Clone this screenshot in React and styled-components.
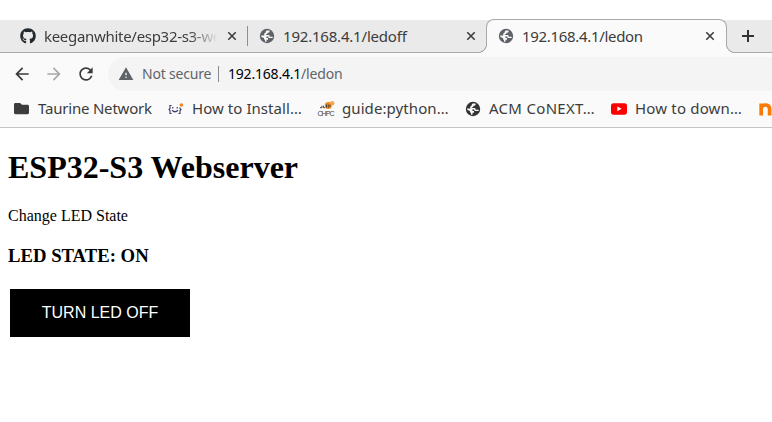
import React from "react";
import styled, { createGlobalStyle } from "styled-components";
import { FaGithub, FaFolder } from "react-icons/fa";
import { MdArrowBack, MdArrowForward, MdRefresh, MdWarning } from "react-icons/md";

const GlobalStyle = createGlobalStyle`
  * { box-sizing: border-box; }
  body { margin: 0; background: #fff; overflow: hidden; }
`;

const Window = styled.div`
  width: 772px;
  height: 422px;
  overflow: hidden;
  padding-top: 19px;
  background: #fff;
  font-family: "Noto Sans", sans-serif;
  color: #3c3c3c;
`;

const TabStrip = styled.div`
  display: flex;
  height: 34px;
  background: linear-gradient(#fff 1px, #eaeaea 1px, #eaeaea 33px, #a9a9a9 33px);
`;

const Tab = styled.div`
  position: relative;
  display: flex;
  align-items: center;
  flex: none;
  width: ${(p) => p.$width}px;
  padding: 0 10px 0 ${(p) => p.$inset}px;
  font-size: 15px;
`;

const ActiveTab = styled(Tab)`
  background: #fafafa;
  border: 1px solid #a9a9a9;
  border-bottom: 0;
  border-radius: 8px 8px 0 0;
  padding-right: 11px;
  padding-bottom: 1px;

  &::before,
  &::after {
    content: "";
    position: absolute;
    bottom: 0;
    width: 9px;
    height: 9px;
  }
  &::before {
    left: -9px;
    background: radial-gradient(circle at 0 0, #eaeaea 7.7px, #a9a9a9 8.2px, #a9a9a9 8.8px, #fafafa 9.3px);
  }
  &::after {
    right: -9px;
    background: radial-gradient(circle at 100% 0, #eaeaea 7.7px, #a9a9a9 8.2px, #a9a9a9 8.8px, #fafafa 9.3px);
  }
`;

const TabTitle = styled.span`
  flex: 1;
  min-width: 0;
  margin-left: 8px;
  margin-right: 6px;
  white-space: nowrap;
  line-height: 22px;
  letter-spacing: ${(p) => p.$spacing || 0}px;
  ${(p) => p.$fade && "mask-image: linear-gradient(to right, #000 82%, transparent 98%);"}
`;

const TabDivider = styled.div`
  flex: none;
  width: 1px;
  height: 20px;
  margin-top: 7px;
  background: #8f8f8f;
`;

const NewTab = styled.div`
  display: flex;
  align-items: center;
  margin-left: 14px;
  padding-bottom: 1px;
`;

const Toolbar = styled.div`
  display: flex;
  align-items: center;
  height: 42px;
  padding-left: 12px;
  background: #fafafa;
`;

const NavButton = styled.span`
  display: flex;
  width: 32px;
  color: ${(p) => (p.$muted ? "#a9a9a9" : "#3a3a3a")};
`;

const AddressBar = styled.div`
  display: flex;
  align-items: center;
  flex: 1;
  height: 34px;
  padding-left: 10px;
  border-radius: 17px 0 0 17px;
  background: #f4f4f4;
  color: #5f6368;
  font-size: 14px;
`;

const AddressText = styled.span`
  padding-bottom: 2px;
  white-space: nowrap;
  letter-spacing: ${(p) => p.$spacing || 0}px;
`;

const Security = styled(AddressText)`
  width: 76px;
  margin-left: 8px;
`;

const AddressDivider = styled.span`
  width: 1px;
  height: 16px;
  margin-right: 9px;
  background: #8a8a8a;
`;

const Host = styled(AddressText)`
  width: 73px;
  color: #000;
`;

const Bookmarks = styled.div`
  display: flex;
  align-items: center;
  height: 33px;
  padding: 0 0 5px 14px;
  border-bottom: 1px solid #c4c4c4;
  background: #fafafa;
`;

const Bookmark = styled.div`
  display: flex;
  align-items: center;
  flex: none;
  width: ${(p) => p.$width}px;
  height: 27px;
  font-size: 15px;
`;

const BookmarkIcon = styled.span`
  display: flex;
  align-items: center;
  width: 16px;
  height: 16px;
  flex: none;
  margin-right: 8px;
`;

const BookmarkLabel = styled.span`
  padding-bottom: 2px;
  white-space: nowrap;
  letter-spacing: ${(p) => p.$spacing}px;
`;

const Page = styled.main`
  padding: 21px 8px;
  color: #000;
  font-family: "Liberation Serif", serif;
  font-size: 16px;
`;

const Heading = styled.h1`
  margin: 0 0 21px;
  font-size: 32px;
  line-height: 37px;
`;

const Description = styled.p`
  margin: 0;
  line-height: 18px;
`;

const LedState = styled.h3`
  margin: 20px 0 22px;
  font-size: 18.72px;
  line-height: 22px;
`;

const LedButton = styled.button`
  display: block;
  width: 180px;
  height: 48px;
  margin-left: 2px;
  padding: 0 0 1px;
  border: 0;
  background: #000;
  color: #fff;
  font: 16px "Liberation Sans", sans-serif;
`;

function Globe({ color = "#5f6368" }) {
  return (
    <svg width="16" height="16" viewBox="0 0 16 16">
      <circle cx="8" cy="8" r="7.2" fill={color} />
      <path
        d="M7.6 2.4 H10.6 V3.6 Q10.6 4.7 9.5 4.7 H8.4 V5.4 Q8.4 6.2 7.6 6.2 H6.8 V7.1 H9.6 Q10.6 7.1 10.6 8.1 V8.8 H13.7 V10 H10.2 Q9.3 10 9.3 9 V8.5 H6.6 Q5.2 8.5 5.2 7.2 V6.2 Q5.2 4.9 6.5 4.7 Q6.6 3.2 7.6 2.4Z M2.2 7.6 H4.6 Q7.6 7.8 7.6 10 H9 V11.7 H7.5 V13.7 Q6.3 13.7 6 13.4 V12 Q5 11.7 5 10.6 V10 L2.4 8.9Z"
        fill="#fafafa"
      />
    </svg>
  );
}

function Close() {
  return (
    <svg width="10" height="10" viewBox="0 0 10 10">
      <path d="M1.3 1.3 L8.7 8.7 M8.7 1.3 L1.3 8.7" stroke="#3c3c3c" strokeWidth="1.6" />
    </svg>
  );
}

function Plus() {
  return (
    <svg width="14" height="14" viewBox="0 0 14 14">
      <path d="M7 1 V13 M1 7 H13" stroke="#333" strokeWidth="2" />
    </svg>
  );
}

function SmileyBraces() {
  return (
    <svg width="16" height="16" viewBox="0 0 16 16" fill="none">
      <path d="M3.5 4.5 H2 V7.5 L1 8.5 L2 9.5 V12.5 H3.5 M10.5 12.5 H12 V9.5 L13 8.5 L12 7.5 V6.5" stroke="#3d3d66" strokeWidth="1.1" />
      <path d="M4.8 6 V7.5 M9.2 6 V7.5 M4 9.3 Q7 12.2 10 9.3" stroke="#3d3d66" strokeWidth="1.2" />
      <circle cx="13.4" cy="4" r="1.8" fill="#f58220" />
    </svg>
  );
}

const ChpcText = styled.text`
  font: 7px "Liberation Sans", sans-serif;
  fill: #444;
`;

function Chpc() {
  return (
    <svg width="18" height="16" viewBox="0 0 18 16" overflow="visible">
      <circle cx="10.3" cy="4.6" r="3.5" fill="#f28a1c" />
      <circle cx="14.2" cy="2.2" r="2.2" fill="#f7a64a" />
      <path d="M2 6.7 H4 V4.7 M5.5 4.7 V6.7 H7 M8.5 3.5 V6.7 M10.3 3.5 V6.7 M12 3.5 V6" stroke="#5a4638" fill="none" />
      <ChpcText x="-0.5" y="14.5" textLength="17">CHPC</ChpcText>
    </svg>
  );
}

function YouTube() {
  return (
    <svg width="16" height="12" viewBox="0 0 16 12">
      <rect width="16" height="11.5" y=".2" rx="2.6" fill="#f00" />
      <path d="M6.3 3.4 L10.6 5.8 L6.3 8.2Z" fill="#fff" />
    </svg>
  );
}

function LetterN() {
  return (
    <svg width="16" height="16" viewBox="0 0 16 16">
      <path d="M2.2 14.5 V2.5 M2.2 8 Q2.4 4 6.2 4 Q10.6 4 10.6 8 V14.5" fill="none" stroke="#f97b06" strokeWidth="3.7" />
    </svg>
  );
}

const bookmarks = [
  { label: "Taurine Network", width: 154, spacing: -0.2, icon: <FaFolder size={15} /> },
  { label: "How to Install…", width: 150, spacing: 0.06, icon: <SmileyBraces /> },
  { label: "guide:python…", width: 147, spacing: 0.08, icon: <Chpc /> },
  { label: "ACM CoNEXT…", width: 146, spacing: 0.3, icon: <Globe color="#333" /> },
  { label: "How to down…", width: 148, spacing: 0.18, icon: <YouTube /> },
  { label: "", width: 40, spacing: 0, icon: <LetterN /> },
];

export default function App() {
  return (
    <>
      <GlobalStyle />
      <Window>
        <TabStrip>
          <Tab $width={247} $inset={20}>
            <FaGithub size={16} color="#24292e" />
            <TabTitle $fade $spacing={-0.3}>keeganwhite/esp32-s3-we</TabTitle>
            <Close />
          </Tab>
          <TabDivider />
          <Tab $width={238} $inset={11}>
            <Globe />
            <TabTitle $spacing={-0.2}>192.168.4.1/ledoff</TabTitle>
            <Close />
          </Tab>
          <ActiveTab $width={241} $inset={11}>
            <Globe />
            <TabTitle $spacing={-0.32}>192.168.4.1/ledon</TabTitle>
            <Close />
          </ActiveTab>
          <NewTab><Plus /></NewTab>
        </TabStrip>
        <Toolbar>
          <NavButton><MdArrowBack size={20} /></NavButton>
          <NavButton $muted><MdArrowForward size={20} /></NavButton>
          <NavButton><MdRefresh size={20} /></NavButton>
          <AddressBar>
            <MdWarning size={16} />
            <Security $spacing={-0.2}>Not secure</Security>
            <AddressDivider />
            <Host $spacing={-0.2}>192.168.4.1</Host>
            <AddressText $spacing={-0.15}>/ledon</AddressText>
          </AddressBar>
        </Toolbar>
        <Bookmarks>
          {bookmarks.map((b) => (
            <Bookmark key={b.width} $width={b.width}>
              <BookmarkIcon>{b.icon}</BookmarkIcon>
              <BookmarkLabel $spacing={b.spacing}>{b.label}</BookmarkLabel>
            </Bookmark>
          ))}
        </Bookmarks>
        <Page>
          <Heading>ESP32-S3 Webserver</Heading>
          <Description>Change LED State</Description>
          <LedState>LED STATE: ON</LedState>
          <LedButton>TURN LED OFF</LedButton>
        </Page>
      </Window>
    </>
  );
}
